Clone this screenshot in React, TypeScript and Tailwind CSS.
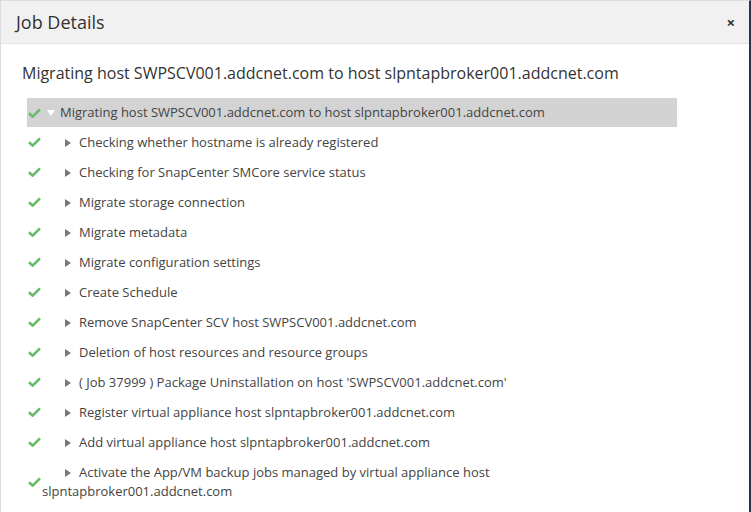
const steps = [
  "Checking whether hostname is already registered",
  "Checking for SnapCenter SMCore service status",
  "Migrate storage connection",
  "Migrate metadata",
  "Migrate configuration settings",
  "Create Schedule",
  "Remove SnapCenter SCV host SWPSCV001.addcnet.com",
  "Deletion of host resources and resource groups",
  "( Job 37999 ) Package Uninstallation on host 'SWPSCV001.addcnet.com'",
  "Register virtual appliance host slpntapbroker001.addcnet.com",
  "Add virtual appliance host slpntapbroker001.addcnet.com",
  "Activate the App/VM backup jobs managed by virtual appliance host slpntapbroker001.addcnet.com",
];

function Check() {
  return (
    <svg width="13" height="10" viewBox="0 0 13 10" className="shrink-0">
      <path d="M1 5.2 L4.6 8.6 L12 1.4" fill="none" stroke="#66bb66" strokeWidth="2.6" />
    </svg>
  );
}

function Caret({ down }: { down?: boolean }) {
  return down ? (
    <svg width="8" height="6" viewBox="0 0 8 6" className="mr-[5px] inline-block align-[1px]">
      <path d="M0 0 L8 0 L4 6 Z" fill="#ffffff" />
    </svg>
  ) : (
    <svg width="6" height="8" viewBox="0 0 6 8" className="mr-[8px] inline-block align-[0px]">
      <path d="M0 0 L6 4 L0 8 Z" fill="#777777" />
    </svg>
  );
}

export default function App() {
  return (
    <div
      className="h-[512px] w-[751px] overflow-hidden border-l border-t border-[#dcdcdc] border-r-2 border-r-[#2b3445] bg-white text-[#333]"
      style={{ fontFamily: '"Open Sans", "Noto Sans", sans-serif' }}
    >
      <div className="flex h-[43px] items-center justify-between border-b border-[#e2e2e2] bg-[#f1f1f1] pl-[15px] pr-[14px]">
        <h2 className="text-[18px] font-normal text-[#333]">Job Details</h2>
        <span className="text-[15px] font-bold leading-none text-[#333]">×</span>
      </div>

      <div className="pl-[21px] pt-[18px]">
        <h3 className="text-[16px] leading-[22px] text-[#333]">
          Migrating host SWPSCV001.addcnet.com to host slpntapbroker001.addcnet.com
        </h3>

        <ul className="ml-[5px] mt-[14px] w-[650px] pl-0 text-[13px] leading-[19px] text-[#444]">
          <li className="flex items-center bg-[#d3d3d3] py-[5px] pl-[1px]">
            <Check />
            <div className="pl-[6px]">
              <Caret down />
              Migrating host SWPSCV001.addcnet.com to host slpntapbroker001.addcnet.com
            </div>
          </li>
          {steps.map((s) => (
            <li key={s} className="flex items-center py-[5.5px] pl-[1px]">
              <Check />
              <div className="pl-[1px] indent-[23px]">
                <Caret />
                {s}
              </div>
            </li>
          ))}
        </ul>
      </div>
    </div>
  );
}
